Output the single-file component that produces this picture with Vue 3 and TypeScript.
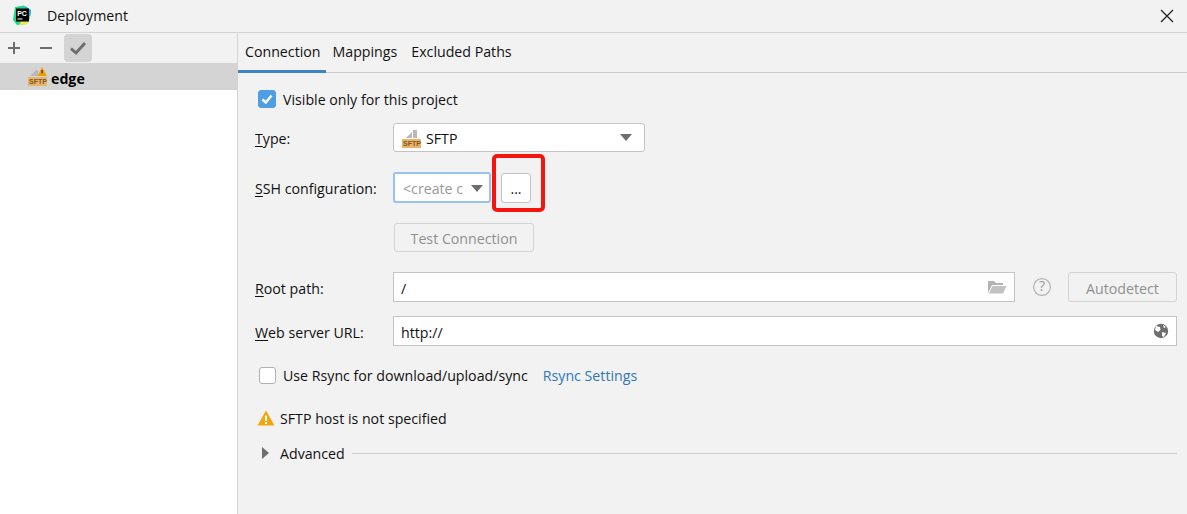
<template>
  <div class="dialog">
    <header class="titlebar">
      <svg class="app-icon" width="20" height="20" viewBox="0 0 20 20">
        <path d="M3 2 L12 0.5 L15 4 L19 5 L18 13 L15 19 L5 20 L1 15 Z" fill="#21d789" />
        <path d="M13 1 L19 5 L18 12 L13 10 Z" fill="#09b7e8" />
        <path d="M10 15 L18 11 L15 19 L7 20 Z" fill="#f3ec3a" />
        <rect x="4" y="3.5" width="13" height="13" fill="#000" />
        <text x="5.2" y="10.5" class="app-icon__text">PC</text>
        <rect x="5.5" y="13.5" width="5" height="1" fill="#fff" />
      </svg>
      <span class="titlebar__name">Deployment</span>
      <svg class="close" width="14" height="14" viewBox="0 0 14 14">
        <path d="M1 1 L13 13 M13 1 L1 13" stroke="#222" stroke-width="1.3" fill="none" />
      </svg>
    </header>

    <div class="body">
      <aside class="side">
        <div class="toolbar">
          <button class="tool">
            <svg width="14" height="14" viewBox="0 0 14 14"><path d="M7 1 V13 M1 7 H13" stroke="#6e6e6e" stroke-width="2" /></svg>
          </button>
          <button class="tool">
            <svg width="14" height="14" viewBox="0 0 14 14"><path d="M1 7 H13" stroke="#6e6e6e" stroke-width="2" /></svg>
          </button>
          <button class="tool tool--active">
            <svg width="18" height="16" viewBox="0 0 18 16"><path d="M2 8.5 L7 13 L16 3" stroke="#6e6e6e" stroke-width="3" fill="none" /></svg>
          </button>
        </div>
        <div class="server">
          <span class="sftp-icon">
            <svg width="20" height="21" viewBox="0 0 20 21">
              <path d="M2 10 L8 4 H10 V10 Z" fill="#b9b9b9" />
              <path d="M9.5 10 L14 1 L19 10 Z" fill="#eda200" />
              <rect x="13.4" y="4" width="1.4" height="3.4" fill="#5a4000" />
              <rect x="0" y="11" width="19" height="9" fill="#e9b36b" />
              <text x="1" y="18.4" class="sftp-icon__text">SFTP</text>
            </svg>
          </span>
          <b class="server__name">edge</b>
        </div>
      </aside>

      <main class="main">
        <nav class="tabs">
          <span v-for="tab in tabs" :key="tab" class="tab" :class="{ 'is-active': tab === 'Connection' }">{{ tab }}</span>
        </nav>

        <div class="form">
          <label class="check check--top">
            <span class="box box--on">
              <svg width="14" height="14" viewBox="0 0 14 14"><path d="M2.5 7.5 L5.8 10.5 L11.5 3.5" stroke="#fff" stroke-width="2.4" fill="none" /></svg>
            </span>
            Visible only for this project
          </label>

          <div class="grid">
            <span class="label"><u>T</u>ype:</span>
            <div class="combo combo--type">
              <svg width="20" height="20" viewBox="0 0 20 20">
                <path d="M4 10 L10 4 V10 Z" fill="#b9b9b9" />
                <rect x="11" y="2" width="4" height="8" fill="#b9b9b9" />
                <rect x="0" y="11" width="19" height="9" fill="#e9b36b" />
                <text x="1" y="18.4" class="sftp-icon__text">SFTP</text>
              </svg>
              <span class="combo__text">SFTP</span>
              <i class="caret" />
            </div>

            <span class="label label--ssh"><u>S</u>SH configuration:</span>
            <div class="ssh">
              <div class="combo combo--ssh">
                <span class="combo__clip">&lt;create c</span>
                <i class="caret" />
              </div>
              <button class="btn btn--dots">...</button>
              <div class="mark" />
            </div>

            <span />
            <button class="btn btn--test" disabled>Test Connection</button>

            <span class="label label--root"><u>R</u>oot path:</span>
            <div class="root">
              <div class="field field--root">
                <span>/</span>
                <svg width="20" height="16" viewBox="0 0 20 16">
                  <path d="M1 14 V2 H7 L9 4 H16 V6 H5 L1 14 Z" fill="#b3b3b3" />
                  <path d="M5.5 7 H19.5 L16 14.5 H1.8 Z" fill="#c2c2c2" />
                </svg>
              </div>
              <svg class="help" width="20" height="20" viewBox="0 0 20 20">
                <circle cx="10" cy="10" r="8.4" fill="none" stroke="#b5b5b5" stroke-width="1.3" />
                <text x="10" y="14.4" class="help__mark">?</text>
              </svg>
              <button class="btn btn--auto" disabled>Autodetect</button>
            </div>

            <span class="label label--web"><u>W</u>eb server URL:</span>
            <div class="field field--web">
              <span>http://</span>
              <svg width="16" height="16" viewBox="0 0 16 16">
                <circle cx="8" cy="8" r="7.2" fill="#6e6e6e" />
                <path d="M3 3 L7 4 L7.5 7 L5 9 L2 7 Z M9 9 L13 10 L11 14 L9 13 Z M10 2 L13 4 L11 5 Z" fill="#fff" />
              </svg>
            </div>
          </div>

          <div class="rsync">
            <label class="check">
              <span class="box" />
              Use Rsync for download/upload/sync
            </label>
            <a class="link">Rsync Settings</a>
          </div>

          <div class="warning">
            <svg width="18" height="16" viewBox="0 0 18 16">
              <path d="M9 0.5 L17.5 15.5 H0.5 Z" fill="#f2a60c" />
              <rect x="8" y="5.5" width="2" height="5.5" fill="#fff" />
              <rect x="8" y="12" width="2" height="2" fill="#fff" />
            </svg>
            SFTP host is not specified
          </div>

          <div class="advanced">
            <i class="arrow" />
            <span>Advanced</span>
            <span class="advanced__line" />
          </div>
        </div>
      </main>
    </div>
  </div>
</template>

<script setup lang="ts">
const tabs: string[] = ['Connection', 'Mappings', 'Excluded Paths']
</script>

<style>
html, body { margin: 0; background: #f2f2f2; }
</style>

<style scoped>
.dialog { width: 1187px; height: 514px; overflow: hidden; display: flex; flex-direction: column; background: #f2f2f2; color: #111; font-family: "Open Sans", "Noto Sans", sans-serif; font-size: 14.2px; }
.titlebar { height: 32px; flex: none; display: flex; align-items: center; padding: 0 13px 0 12px; border-bottom: 1px solid #d4d4d4; }
.app-icon { flex: none; margin-bottom: 2px; }
.app-icon__text { font-size: 7px; font-weight: 700; fill: #fff; font-family: "Liberation Sans", sans-serif; }
.titlebar__name { margin-left: 15px; flex: 1; padding-bottom: 2px; }
.close { flex: none; margin-bottom: 1px; }
.body { flex: 1; display: flex; min-height: 0; }
.side { width: 237px; flex: none; background: #fff; border-right: 1px solid #d4d4d4; }
.toolbar { height: 30px; display: flex; align-items: center; gap: 5px; background: #f2f2f2; }
.tool { width: 27px; height: 28px; padding: 0; border: 0; border-radius: 4px; background: none; display: flex; align-items: center; justify-content: center; }
.tool--active { width: 28px; background: #d4d4d4; }
.server { height: 27px; display: flex; align-items: center; padding-left: 28px; background: #d4d4d4; }
.sftp-icon { width: 23px; height: 21px; flex: none; }
.sftp-icon__text { font-size: 7px; font-weight: 700; fill: #7a5a20; font-family: "Liberation Sans", sans-serif; }
.server__name { font-weight: 700; color: #000; padding-top: 3px; }
.main { flex: 1; min-width: 0; }
.tabs { height: 40px; box-sizing: border-box; display: flex; border-bottom: 1px solid #c9c9c9; }
.tab { height: 40px; box-sizing: border-box; padding: 9px 7px 0 7px; white-space: nowrap; }
.tab.is-active { padding-right: 5px; border-bottom: 3px solid #4083c9; }
.form { padding: 15px 10px 0 21px; }
.check { display: flex; align-items: center; gap: 7px; height: 22px; }
.box { width: 17px; height: 17px; flex: none; box-sizing: border-box; border: 1px solid #b0b0b0; border-radius: 3px; background: #fff; display: flex; align-items: center; justify-content: center; }
.box--on { width: 18px; height: 18px; margin-left: -1px; background: #4f9ee3; border-color: #4f9ee3; }
.grid { display: grid; grid-template-columns: 138px 1fr; margin: 13px 0 0 -4px; align-items: center; }
.label { padding-top: 2px; }
.label u { text-underline-offset: 2px; }
.label--ssh { margin-top: 20px; }
.label--root { margin-top: 20px; }
.label--web { margin-top: 14px; }
.combo { height: 29px; box-sizing: border-box; display: flex; align-items: center; background: #fff; border: 1px solid #c4c4c4; border-radius: 3px; }
.combo--type { width: 252px; padding: 0 12px 0 8px; gap: 4px; }
.combo__text { flex: 1; padding-top: 2px; }
.caret { width: 0; height: 0; border-left: 6px solid transparent; border-right: 6px solid transparent; border-top: 7px solid #6e6e6e; flex: none; }
.ssh { position: relative; display: flex; align-items: center; gap: 10px; margin-top: 20px; }
.combo--ssh { width: 98px; height: 31px; padding: 2px 6px 0 8px; border: 2px solid #97c3f3; justify-content: space-between; }
.combo__clip { width: 60px; overflow: hidden; white-space: nowrap; color: #999; }
.btn { box-sizing: border-box; font: inherit; background: #fff; border: 1px solid #c4c4c4; border-radius: 3px; padding: 2px 0 0; }
.btn--dots { width: 30px; height: 30px; color: #111; }
.mark { position: absolute; left: 99px; top: -18px; width: 53px; height: 58px; box-sizing: border-box; border: 4px solid #f5150f; border-radius: 5px; pointer-events: none; }
.btn--test { width: 140px; height: 29px; margin: 20px 0 0 1px; color: #8f8f8f; background: #f2f2f2; border-color: #d4d4d4; }
.root { display: flex; align-items: center; margin-top: 20px; }
.field { height: 30px; box-sizing: border-box; display: flex; align-items: center; justify-content: space-between; background: #fff; border: 1px solid #c4c4c4; padding: 0 7px; }
.field > span { padding-top: 2px; }
.field--root { width: 622px; }
.help { margin-left: 17px; flex: none; }
.help__mark { font-size: 14px; fill: #9a9a9a; text-anchor: middle; font-family: "Open Sans", sans-serif; }
.btn--auto { width: 109px; height: 30px; margin-left: 16px; color: #8f8f8f; background: #f2f2f2; border-color: #d4d4d4; }
.field--web { width: 784px; margin-top: 14px; }
.rsync { display: flex; align-items: center; gap: 15px; margin-top: 18px; }
.link { color: #2f76bb; }
.warning { display: flex; align-items: center; gap: 5px; margin: 21px 0 0 -2px; height: 22px; }
.advanced { display: flex; align-items: center; margin: 13px 0 0 3px; height: 22px; }
.arrow { width: 0; height: 0; border-top: 6px solid transparent; border-bottom: 6px solid transparent; border-left: 7px solid #6e6e6e; margin-right: 11px; }
.advanced__line { flex: 1; height: 1px; background: #cfcfcf; margin-left: 7px; }
</style>
